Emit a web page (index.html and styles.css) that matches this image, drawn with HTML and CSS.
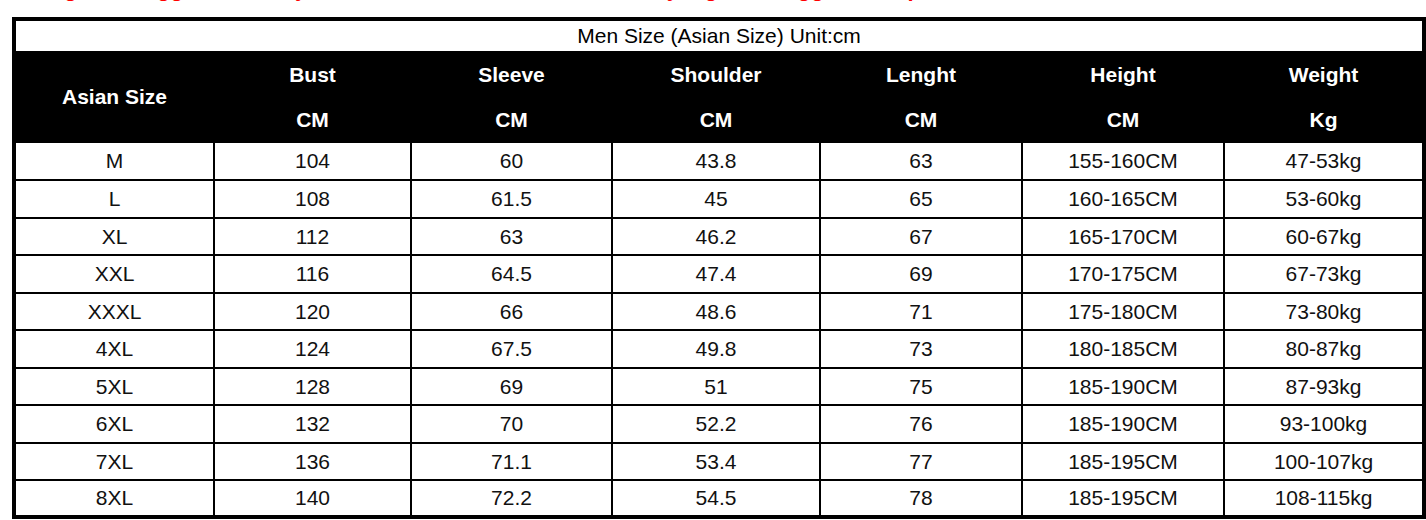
FILE: index.html
```html
<!DOCTYPE html>
<html lang="en">
<head>
<meta charset="utf-8">
<title>Men Size (Asian Size)</title>
<link rel="stylesheet" href="styles.css">
</head>
<body>
<div class="note">
  <p class="note-text">Big size suggest that buy one or two sizes more than usually big size suggest one plus size.</p>
</div>
<table class="size-table">
  <colgroup>
    <col class="col-a">
    <col class="col-b">
    <col class="col-c">
    <col class="col-d">
    <col class="col-e">
    <col class="col-f">
    <col class="col-g">
  </colgroup>
  <thead>
    <tr class="title-row"><th colspan="7">Men Size (Asian Size) Unit:cm</th></tr>
    <tr class="head-row">
      <th rowspan="2">Asian Size</th>
      <th>Bust</th><th>Sleeve</th><th>Shoulder</th><th>Lenght</th><th>Height</th><th>Weight</th>
    </tr>
    <tr class="head-row">
      <th>CM</th><th>CM</th><th>CM</th><th>CM</th><th>CM</th><th>Kg</th>
    </tr>
  </thead>
  <tbody>
    <tr class="r-first"><td>M</td><td>104</td><td>60</td><td>43.8</td><td>63</td><td>155-160CM</td><td>47-53kg</td></tr>
    <tr class="r-long"><td>L</td><td>108</td><td>61.5</td><td>45</td><td>65</td><td>160-165CM</td><td>53-60kg</td></tr>
    <tr class="r-short"><td>XL</td><td>112</td><td>63</td><td>46.2</td><td>67</td><td>165-170CM</td><td>60-67kg</td></tr>
    <tr class="r-long"><td>XXL</td><td>116</td><td>64.5</td><td>47.4</td><td>69</td><td>170-175CM</td><td>67-73kg</td></tr>
    <tr class="r-short"><td>XXXL</td><td>120</td><td>66</td><td>48.6</td><td>71</td><td>175-180CM</td><td>73-80kg</td></tr>
    <tr class="r-long"><td>4XL</td><td>124</td><td>67.5</td><td>49.8</td><td>73</td><td>180-185CM</td><td>80-87kg</td></tr>
    <tr class="r-short"><td>5XL</td><td>128</td><td>69</td><td>51</td><td>75</td><td>185-190CM</td><td>87-93kg</td></tr>
    <tr class="r-long"><td>6XL</td><td>132</td><td>70</td><td>52.2</td><td>76</td><td>185-190CM</td><td>93-100kg</td></tr>
    <tr class="r-short"><td>7XL</td><td>136</td><td>71.1</td><td>53.4</td><td>77</td><td>185-195CM</td><td>100-107kg</td></tr>
    <tr class="r-last"><td>8XL</td><td>140</td><td>72.2</td><td>54.5</td><td>78</td><td>185-195CM</td><td>108-115kg</td></tr>
  </tbody>
</table>
</body>
</html>
```

FILE: styles.css
```css
html, body {
  margin: 0;
  padding: 0;
  background: #fff;
}
body {
  font-family: "Liberation Sans", Arial, sans-serif;
  color: #000;
  overflow: hidden;
}
.note {
  height: 17px;
  overflow: hidden;
}
.note-text {
  margin: -22px 0 0 42px;
  font-size: 22px;
  line-height: 22px;
  font-weight: bold;
  color: #ff0000;
  white-space: nowrap;
}
.size-table {
  margin-left: 12px;
  width: 1414px;
  table-layout: fixed;
  border-collapse: collapse;
  border: 4px solid #000;
}
.col-a { width: 200px; }
.col-b { width: 197px; }
.col-c { width: 201px; }
.col-d { width: 208px; }
.col-e { width: 202px; }
.col-f { width: 202px; }
.col-g { width: 200px; }
.size-table th,
.size-table td {
  padding: 0;
  text-align: center;
  font-size: 21px;
  border: 2px solid #000;
}
.title-row th {
  height: 30px;
  font-weight: normal;
  background: #fff;
  color: #000;
}
.head-row th {
  height: 43px;
  background: #000;
  color: #fff;
  font-weight: bold;
}
.size-table td {
  color: #111;
}
.r-first td { height: 36px; }
.r-long td { height: 36px; }
.r-short td { height: 35px; }
.r-last td { height: 34px; }
```
